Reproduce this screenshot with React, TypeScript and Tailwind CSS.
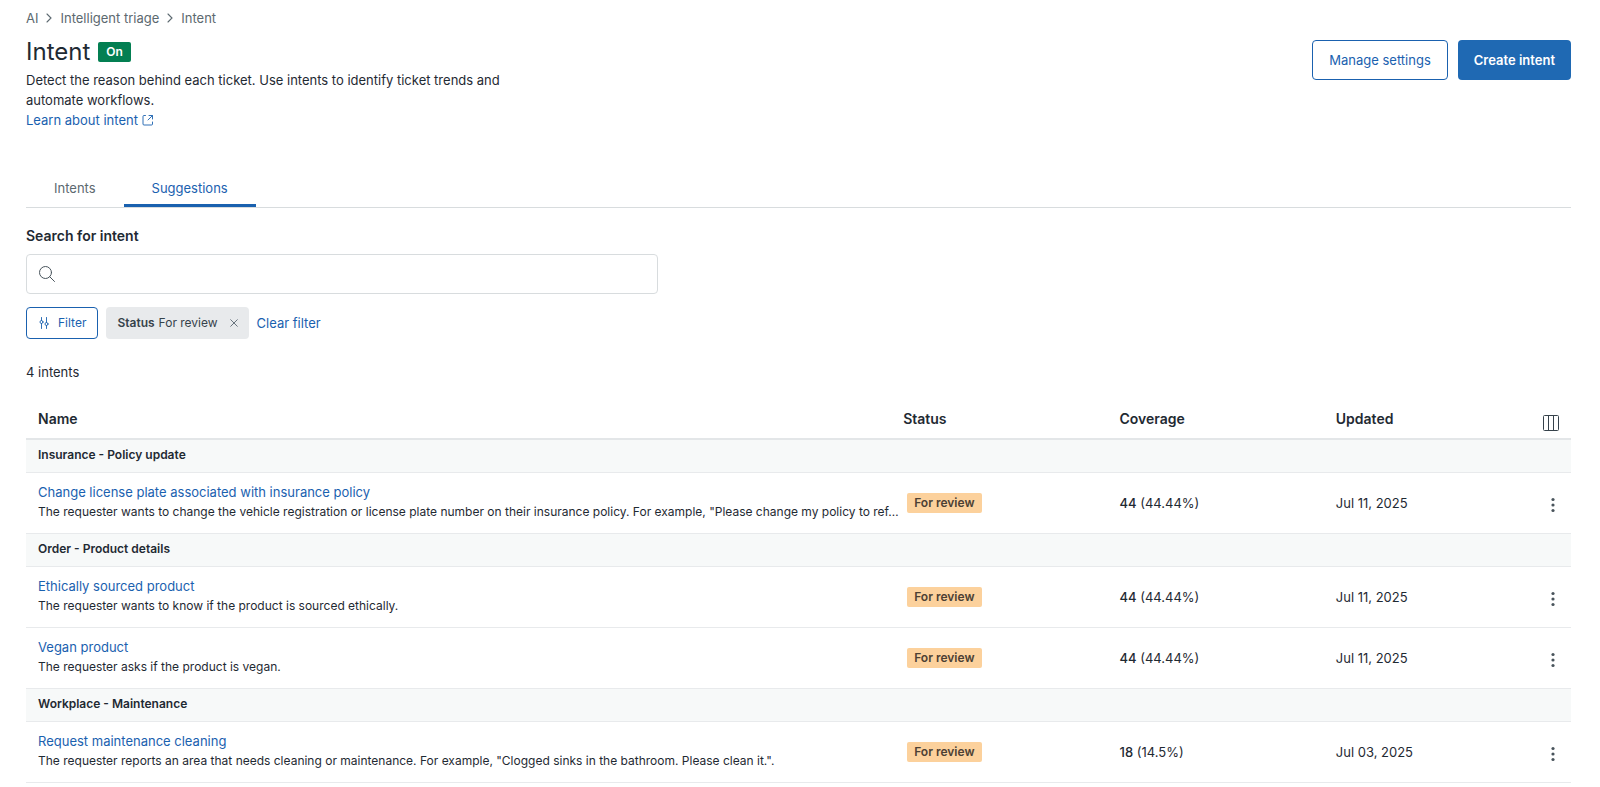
import React from "react";

type Intent = {
  name: string;
  description: string;
  count: string;
  share: string;
  updated: string;
};

type Group = { title: string; intents: Intent[] };

const groups: Group[] = [
  {
    title: "Insurance - Policy update",
    intents: [
      {
        name: "Change license plate associated with insurance policy",
        description:
          'The requester wants to change the vehicle registration or license plate number on their insurance policy. For example, "Please change my policy to ref…',
        count: "44",
        share: "(44.44%)",
        updated: "Jul 11, 2025",
      },
    ],
  },
  {
    title: "Order - Product details",
    intents: [
      {
        name: "Ethically sourced product",
        description: "The requester wants to know if the product is sourced ethically.",
        count: "44",
        share: "(44.44%)",
        updated: "Jul 11, 2025",
      },
      {
        name: "Vegan product",
        description: "The requester asks if the product is vegan.",
        count: "44",
        share: "(44.44%)",
        updated: "Jul 11, 2025",
      },
    ],
  },
  {
    title: "Workplace - Maintenance",
    intents: [
      {
        name: "Request maintenance cleaning",
        description:
          'The requester reports an area that needs cleaning or maintenance. For example, "Clogged sinks in the bathroom. Please clean it.".',
        count: "18",
        share: "(14.5%)",
        updated: "Jul 03, 2025",
      },
    ],
  },
];

function Chevron() {
  return (
    <svg viewBox="0 0 8 12" className="h-3 w-2" fill="none" stroke="#5c6970" strokeWidth="1.1" strokeLinecap="round" aria-hidden="true">
      <path d="M2 2 6 6l-4 4" />
    </svg>
  );
}

function ExternalIcon() {
  return (
    <svg viewBox="0 0 12 12" className="h-3 w-3" fill="none" stroke="currentColor" strokeWidth=".9" strokeLinecap="round" aria-hidden="true">
      <path d="M3.5 1.500H2a1 1 0 0 0-1 1V10a1 1 0 0 0 1 1h7.500a1 1 0 0 0 1-1V8M7 1.500h3.500V5M10.300 1.700 6 6" />
    </svg>
  );
}

function SearchIcon() {
  return (
    <svg viewBox="0 0 16 16" className="h-4 w-4 shrink-0" fill="none" stroke="#49545c" strokeLinecap="round" aria-hidden="true">
      <circle cx="6.5" cy="6.5" r="6" />
      <path d="m10.8 10.8 4.7 4.7" />
    </svg>
  );
}

function FilterIcon() {
  return (
    <svg viewBox="0 0 12 12" className="h-3 w-3" fill="none" stroke="currentColor" strokeWidth=".9" strokeLinecap="round" aria-hidden="true">
      <circle cx="3.500" cy="5" r="1.500" />
      <circle cx="8.500" cy="7" r="1.500" />
      <path d="M3.500.5v3M3.500 6.500v5M8.500.5v5M8.500 8.500v3" />
    </svg>
  );
}

function CloseIcon() {
  return (
    <svg viewBox="0 0 8 8" className="h-2 w-2" fill="none" stroke="#68737d" strokeLinecap="round" aria-hidden="true">
      <path d="m.7.7 6.600 6.600M7.300.7.7 7.300" />
    </svg>
  );
}

function ColumnsIcon() {
  return (
    <svg viewBox="0 0 16 16" className="h-4 w-4" fill="none" stroke="#36424b" aria-hidden="true">
      <rect x=".5" y=".5" width="15" height="15" rx="1" />
      <path d="M5.500.5v15M10.500.5v15" />
    </svg>
  );
}

function DotsIcon() {
  return (
    <svg viewBox="0 0 16 16" className="h-4 w-4" fill="#49545c" aria-hidden="true">
      <circle cx="8" cy="2.500" r="1.600" />
      <circle cx="8" cy="8" r="1.600" />
      <circle cx="8" cy="13.500" r="1.600" />
    </svg>
  );
}

function IntentRow({ intent }: { intent: Intent }) {
  return (
    <tr className="h-[61px] border-b border-[#e8eaec]">
      <td className="pb-0.5 pl-3">
        <a href="#" className="block truncate leading-5 text-[#1a61af]">{intent.name}</a>
        <p className="-mr-3 truncate text-[12px] leading-5">{intent.description}</p>
      </td>
      <td className="px-4">
        <span className="inline-block rounded-[2px] bg-[#fcd19c] px-[7px] align-middle text-[12px] font-semibold leading-5 text-[#4c4034]">
          For review
        </span>
      </td>
      <td className="px-3">
        <span className="font-medium">{intent.count}</span> {intent.share}
      </td>
      <td className="px-3">{intent.updated}</td>
      <td className="pr-2.5 pt-1">
        <button type="button" aria-label={`Actions for ${intent.name}`} className="ml-auto block">
          <DotsIcon />
        </button>
      </td>
    </tr>
  );
}

export default function App() {
  return (
    <main className="bg-white pb-1 pl-[26px] pr-[29px] pt-2 font-[Inter,sans-serif] text-[13px] leading-5 text-[#1f2a33]">
      <nav aria-label="Breadcrumb">
        <ol className="flex items-center gap-[7px] text-[#5c6970]">
          <li><a href="#">AI</a></li>
          <li><Chevron /></li>
          <li><a href="#">Intelligent triage</a></li>
          <li><Chevron /></li>
          <li aria-current="page">Intent</li>
        </ol>
      </nav>

      <header className="mt-2 flex items-start justify-between">
        <div>
          <div className="flex items-center gap-2">
            <h1 className="text-[24px] leading-8">Intent</h1>
            <span className="rounded-[2px] bg-[#037f52] px-2 text-[12px] font-semibold leading-5 text-white">On</span>
          </div>
          <p className="mt-0.5 max-w-[500px]">
            Detect the reason behind each ticket. Use intents to identify ticket trends and automate workflows.
          </p>
          <a href="#" className="flex w-fit items-center gap-1 text-[#1a61af]">
            Learn about intent <ExternalIcon />
          </a>
        </div>
        <div className="mt-1 flex gap-2.5">
          <button type="button" className="h-10 rounded border border-[#1a61af] px-4 text-[#1a61af]">Manage settings</button>
          <button type="button" className="h-10 rounded bg-[#1f69b3] px-4 font-semibold text-white">Create intent</button>
        </div>
      </header>

      <div role="tablist" className="mt-10 flex border-b border-[#d8dcde]">
        <button type="button" role="tab" aria-selected="false" className="border-b-3 border-transparent px-7 pb-1.5 pt-2 text-[#5c6970]">Intents</button>
        <button type="button" role="tab" aria-selected="true" className="border-b-3 border-[#1a61af] px-7 pb-1.5 pt-2 text-[#1a61af]">Suggestions</button>
      </div>

      <label htmlFor="intent-search" className="mt-[18px] block w-fit text-[14px] font-semibold">Search for intent</label>
      <div className="mt-2 flex h-10 max-w-[632px] items-center gap-3 rounded border border-[#d8dcde] px-3">
        <SearchIcon />
        <input id="intent-search" type="search" className="min-w-0 flex-1 outline-none" />
      </div>

      <div className="mt-[13px] flex items-center gap-2">
        <button type="button" className="flex h-8 items-center gap-2 rounded border border-[#1a61af] px-[11px] text-[12px] text-[#1a61af]">
          <FilterIcon /> Filter
        </button>
        <span className="flex h-8 items-center rounded bg-[#e8eaec] px-[11px] text-[12px] text-[#36424b]">
          <span className="font-semibold">Status</span>
          <span className="ml-1">For review</span>
          <button type="button" aria-label="Remove status filter" className="ml-3"><CloseIcon /></button>
        </span>
        <button type="button" className="text-[#1a61af]">Clear filter</button>
      </div>

      <p className="mt-[23px]">4 intents</p>

      <table className="mt-[17px] w-full table-fixed border-collapse text-left">
        <thead>
          <tr className="h-10 border-b-2 border-[#e3e6e8] text-[14px]">
            <th scope="col" className="w-[56%] px-3 font-semibold">Name</th>
            <th scope="col" className="w-[14%] px-3 font-semibold">Status</th>
            <th scope="col" className="w-[14%] px-3 font-semibold">Coverage</th>
            <th scope="col" className="w-[12%] px-3 font-semibold">Updated</th>
            <th scope="col" className="pr-3 pt-2">
              <button type="button" aria-label="Choose columns" className="ml-auto block"><ColumnsIcon /></button>
            </th>
          </tr>
        </thead>
        {groups.map((group) => (
          <tbody key={group.title}>
            <tr className="h-[33px] border-b border-[#e8eaec] bg-[#f7f9f9]">
              <th scope="rowgroup" colSpan={5} className="px-3 pb-0.5 text-[12px] font-semibold">{group.title}</th>
            </tr>
            {group.intents.map((intent) => (
              <IntentRow key={intent.name} intent={intent} />
            ))}
          </tbody>
        ))}
      </table>
    </main>
  );
}
